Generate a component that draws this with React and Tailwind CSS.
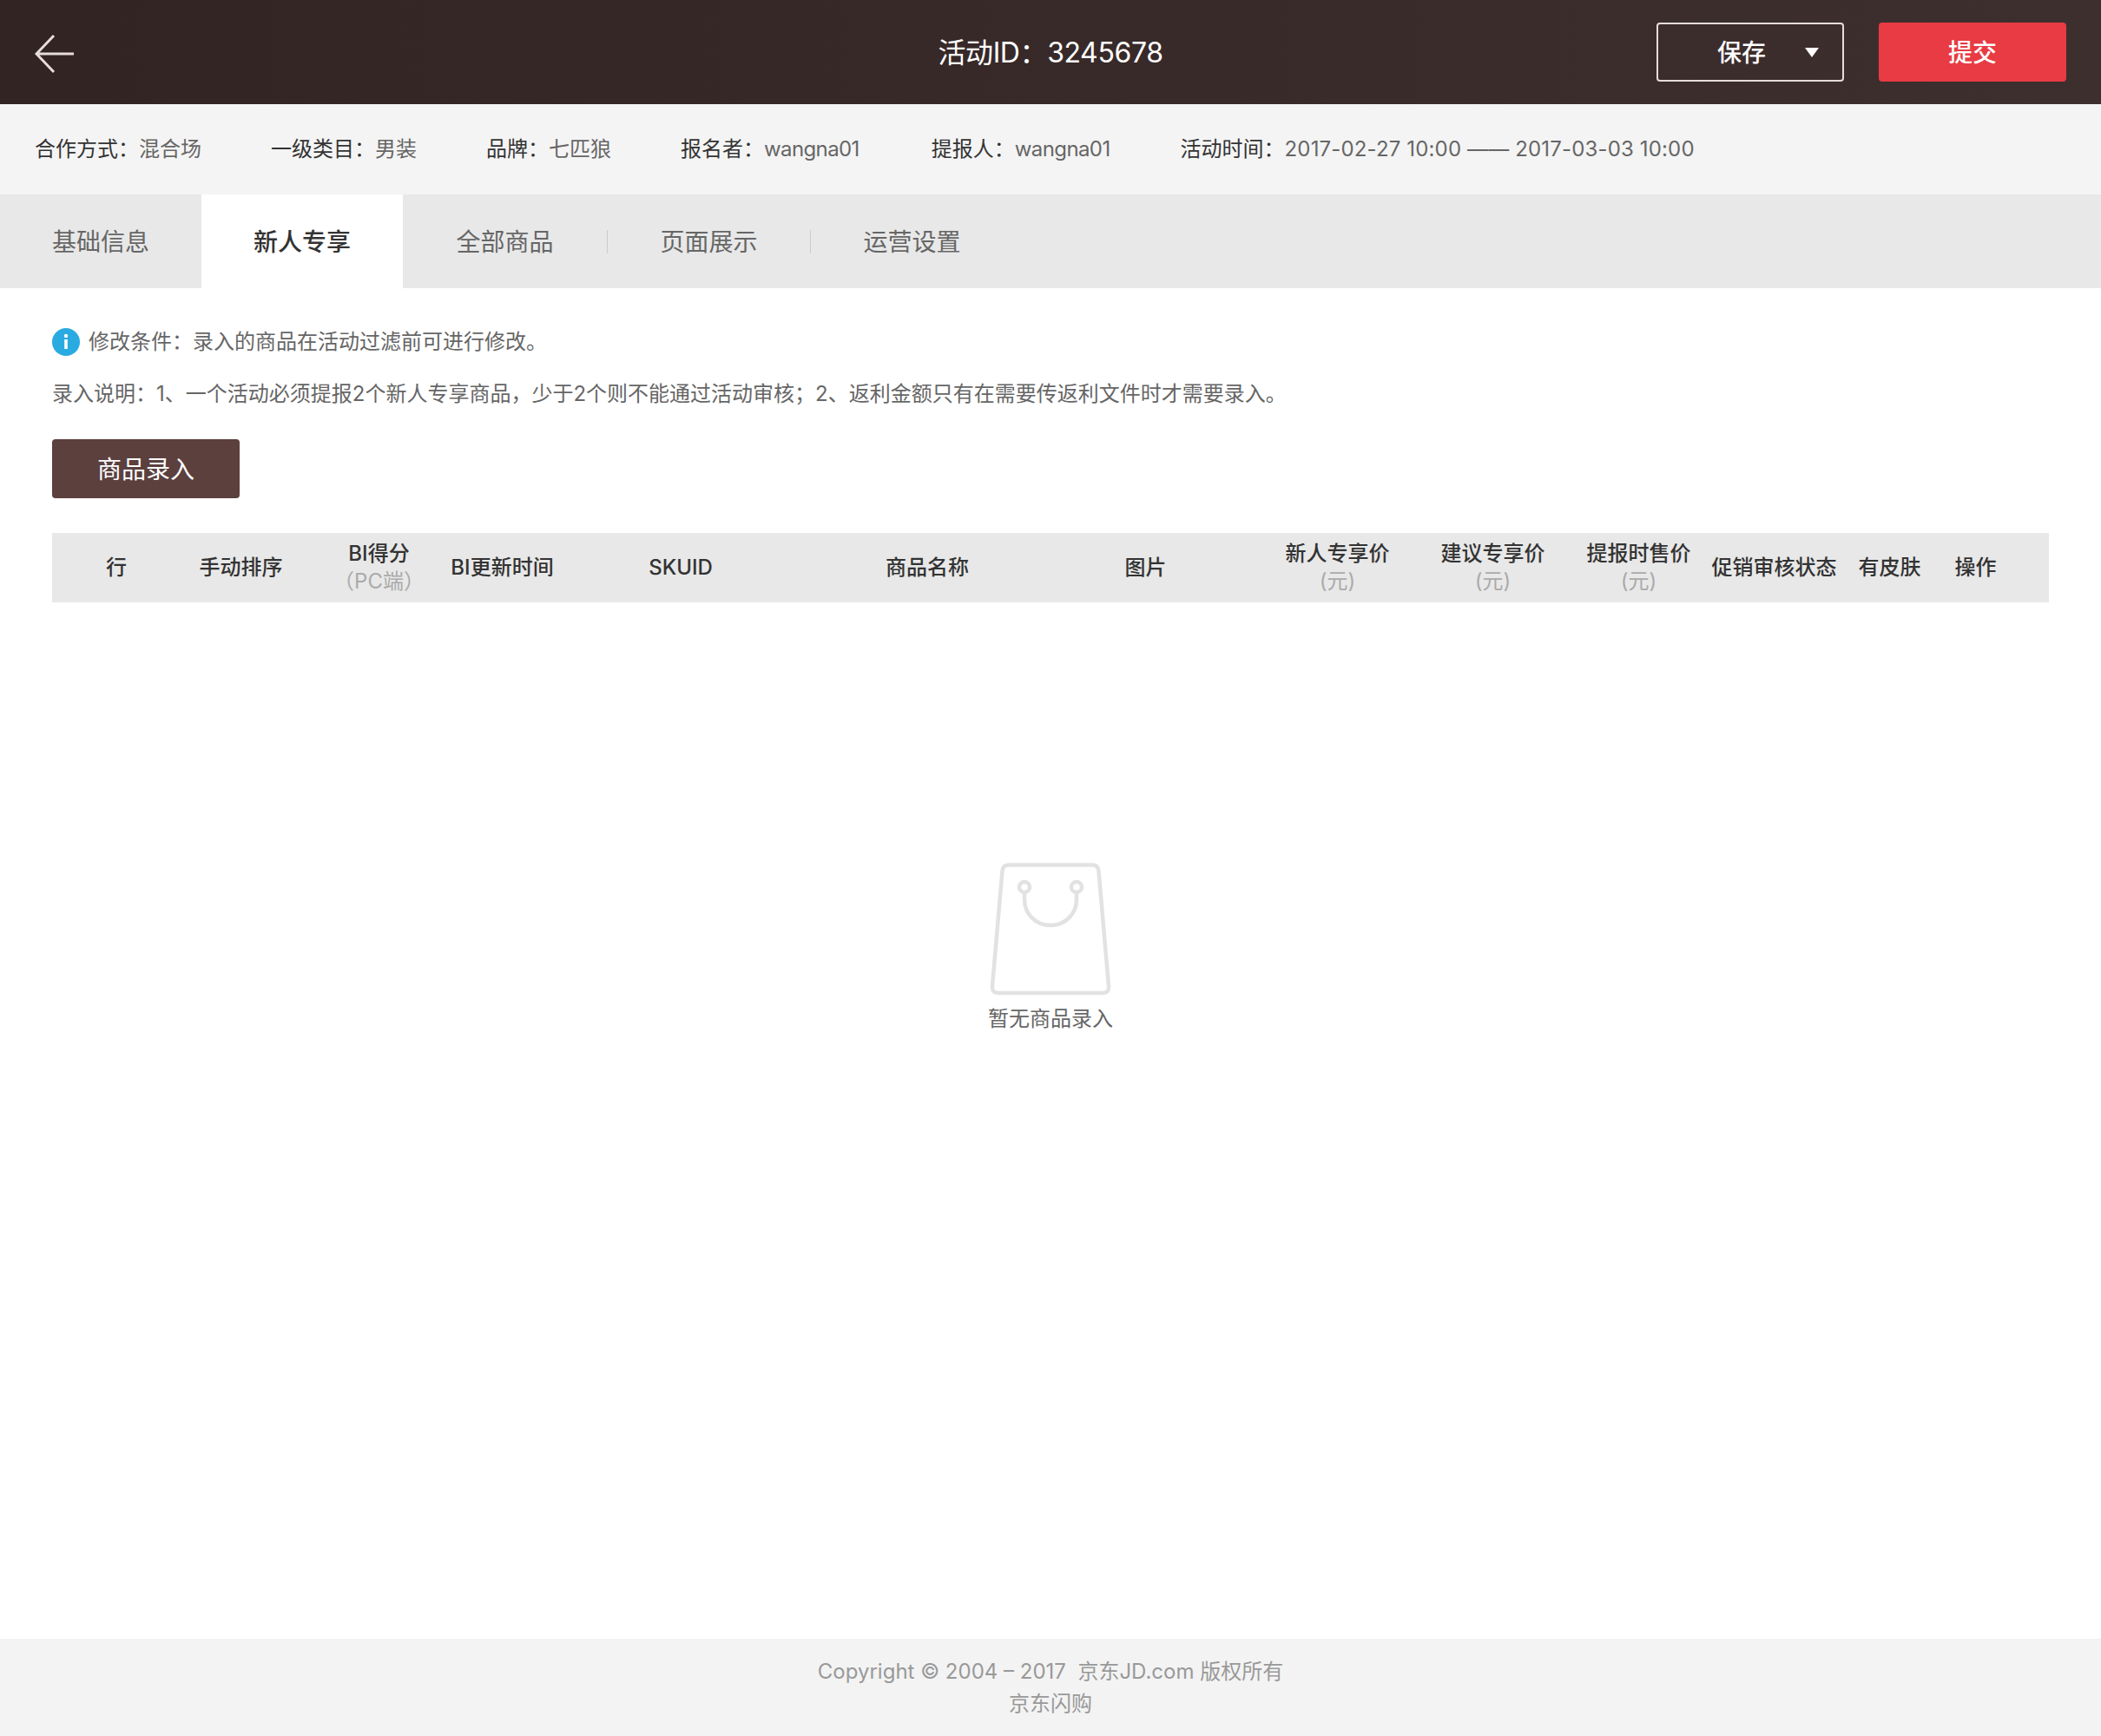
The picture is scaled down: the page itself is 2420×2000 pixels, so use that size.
import React from "react";

const C = "\uFF1A";
const infos = [
  ["合作方式" + C, "混合场", "", ""],
  ["一级类目" + C, "男装", "", ""],
  ["品牌" + C, "七匹狼", "", ""],
  ["报名者" + C, "wangna01", "tracking-[-0.6px]", ""],
  ["提报人" + C, "wangna01", "tracking-[-0.6px]", "ml-[3px]"],
  ["活动时间" + C, "2017-02-27 10:00 —— 2017-03-03 10:00", "tracking-[0.15px]", "ml-[1px]"],
];

const cols = [
  ["行", null, "w-[148px]"],
  ["手动排序", null, "w-[139px]"],
  ["BI得分", "\uFF08PC端\uFF09", "w-[179px]"],
  ["BI更新时间", null, "w-[105px]"],
  ["SKUID", null, "w-[306px]"],
  ["商品名称", null, "w-[262px]"],
  ["图片", null, "w-[241px]"],
  ["新人专享价", "(元)", "w-[201px]"],
  ["建议专享价", "(元)", "w-[157px]"],
  ["提报时售价", "(元)", "w-[179px]"],
  ["促销审核状态", null, "w-[133px]"],
  ["有皮肤", null, "w-[133px]"],
  ["操作", null, "w-[65px]"],
];

function Bag() {
  return (
    <svg width="140" height="156" viewBox="0 0 140 156" fill="none" stroke="#e2e2e2" strokeWidth="4.5">
      <path d="M22 4.500H118Q125 4.500 125.500 11.500L137 144Q137.500 152 130 152H10Q2.500 152 3 144L14.500 11.500Q15 4.500 22 4.500Z" strokeLinejoin="round" />
      <circle cx="40" cy="30" r="6" />
      <circle cx="100" cy="30" r="6" />
      <path d="M40 36V44C40 61 53 74 70 74S100 61 100 44V36" />
    </svg>
  );
}

export default function App() {
  return (
    <div className="flex min-h-[2000px] w-full flex-col bg-white font-['Inter','Noto_Sans_CJK_SC',sans-serif] text-[24px] text-[#666]">
      <header className="grid h-[120px] grid-cols-3 items-center bg-gradient-to-r from-[#312423] to-[#3e2f2f] px-[40px]">
        <div className="pt-[3px]">
          <svg width="46" height="46" viewBox="0 0 46 46" fill="none" stroke="#e8dcdc" strokeWidth="3">
            <path d="M22 2L2 23L22 44M2 23H45" />
          </svg>
        </div>
        <div className="pt-[2px] text-center text-[32px] leading-[40px] tracking-[-0.4px] text-white">{"活动ID" + C + "3245678"}</div>
        <div className="flex justify-end gap-[40px]">
          <button className="relative flex h-[68px] w-[216px] items-center rounded-[4px] border-2 border-[#e6dcdc] pl-[68px] pt-[1px] text-[28px] font-medium text-white">
            保存
            <span className="absolute right-[27px] top-[27px] h-0 w-0 border-x-[8px] border-t-[11px] border-x-transparent border-t-white" />
          </button>
          <button className="h-[68px] w-[216px] rounded-[4px] bg-[#e83b43] pt-[1px] text-[28px] font-medium text-white">提交</button>
        </div>
      </header>

      <div className="flex h-[104px] items-center gap-[80px] bg-[#f4f4f4] px-[40px]">
        {infos.map(([k, v, c, m]) => (
          <div key={k} className={`whitespace-nowrap ${m}`}>
            <span className="text-[#333]">{k}</span>
            <span className={c}>{v}</span>
          </div>
        ))}
      </div>

      <nav className="flex h-[108px] items-center bg-[#e8e8e8] text-[28px] text-[#666]">
        <div className="w-[232px] pt-[2px] text-center">基础信息</div>
        <div className="flex h-full w-[232px] items-center justify-center bg-white pt-[2px] font-medium text-[#333]">新人专享</div>
        <div className="w-[235px] pt-[2px] text-center">全部商品</div>
        <div className="h-[27px] w-px bg-[#cccccc]" />
        <div className="w-[233px] pt-[2px] text-center">页面展示</div>
        <div className="h-[27px] w-px bg-[#cccccc]" />
        <div className="w-[233px] pt-[2px] text-center">运营设置</div>
      </nav>

      <main className="flex flex-1 flex-col px-[60px]">
        <div className="mt-[46px] flex h-[32px] items-center gap-[10px]">
          <svg width="32" height="32" viewBox="0 0 32 32">
            <circle cx="16" cy="16" r="16" fill="#29abe2" />
            <circle cx="16" cy="9" r="2.200" fill="#fff" />
            <rect x="14.200" y="13" width="3.600" height="11" fill="#fff" />
          </svg>
          <span>{"修改条件" + C + "录入的商品在活动过滤前可进行修改。"}</span>
        </div>
        <p className="mt-[28px] h-[32px] leading-[32px]">
          {"录入说明" + C + "1、一个活动必须提报2个新人专享商品\uFF0C少于2个则不能通过活动审核\uFF1B2、返利金额只有在需要传返利文件时才需要录入。"}
        </p>
        <button className="mt-[36px] h-[68px] w-[216px] rounded-[4px] bg-[#5b403e] pt-[1px] text-[28px] text-white">商品录入</button>

        <div className="mt-[40px] flex h-[80px] items-center bg-[#e8e8e8] pr-[52px] text-[#333]">
          {cols.map(([t, s, w]) => (
            <div key={t} className={`flex flex-col items-center whitespace-nowrap leading-[32px] ${w}`}>
              <span className="font-medium">{t}</span>
              {s && <span className="text-[#aaaaaa]">{s}</span>}
            </div>
          ))}
        </div>

        <div className="mt-[298px] flex flex-col items-center">
          <Bag />
          <span className="mt-[8px] leading-[36px]">暂无商品录入</span>
        </div>
      </main>

      <footer className="flex h-[112px] flex-col items-center bg-[#f3f3f3] pt-[19px] leading-[37px] text-[#999]">
        <span>Copyright © 2004 – 2017{"\u00a0\u00a0"}京东JD.com 版权所有</span>
        <span>京东闪购</span>
      </footer>
    </div>
  );
}
